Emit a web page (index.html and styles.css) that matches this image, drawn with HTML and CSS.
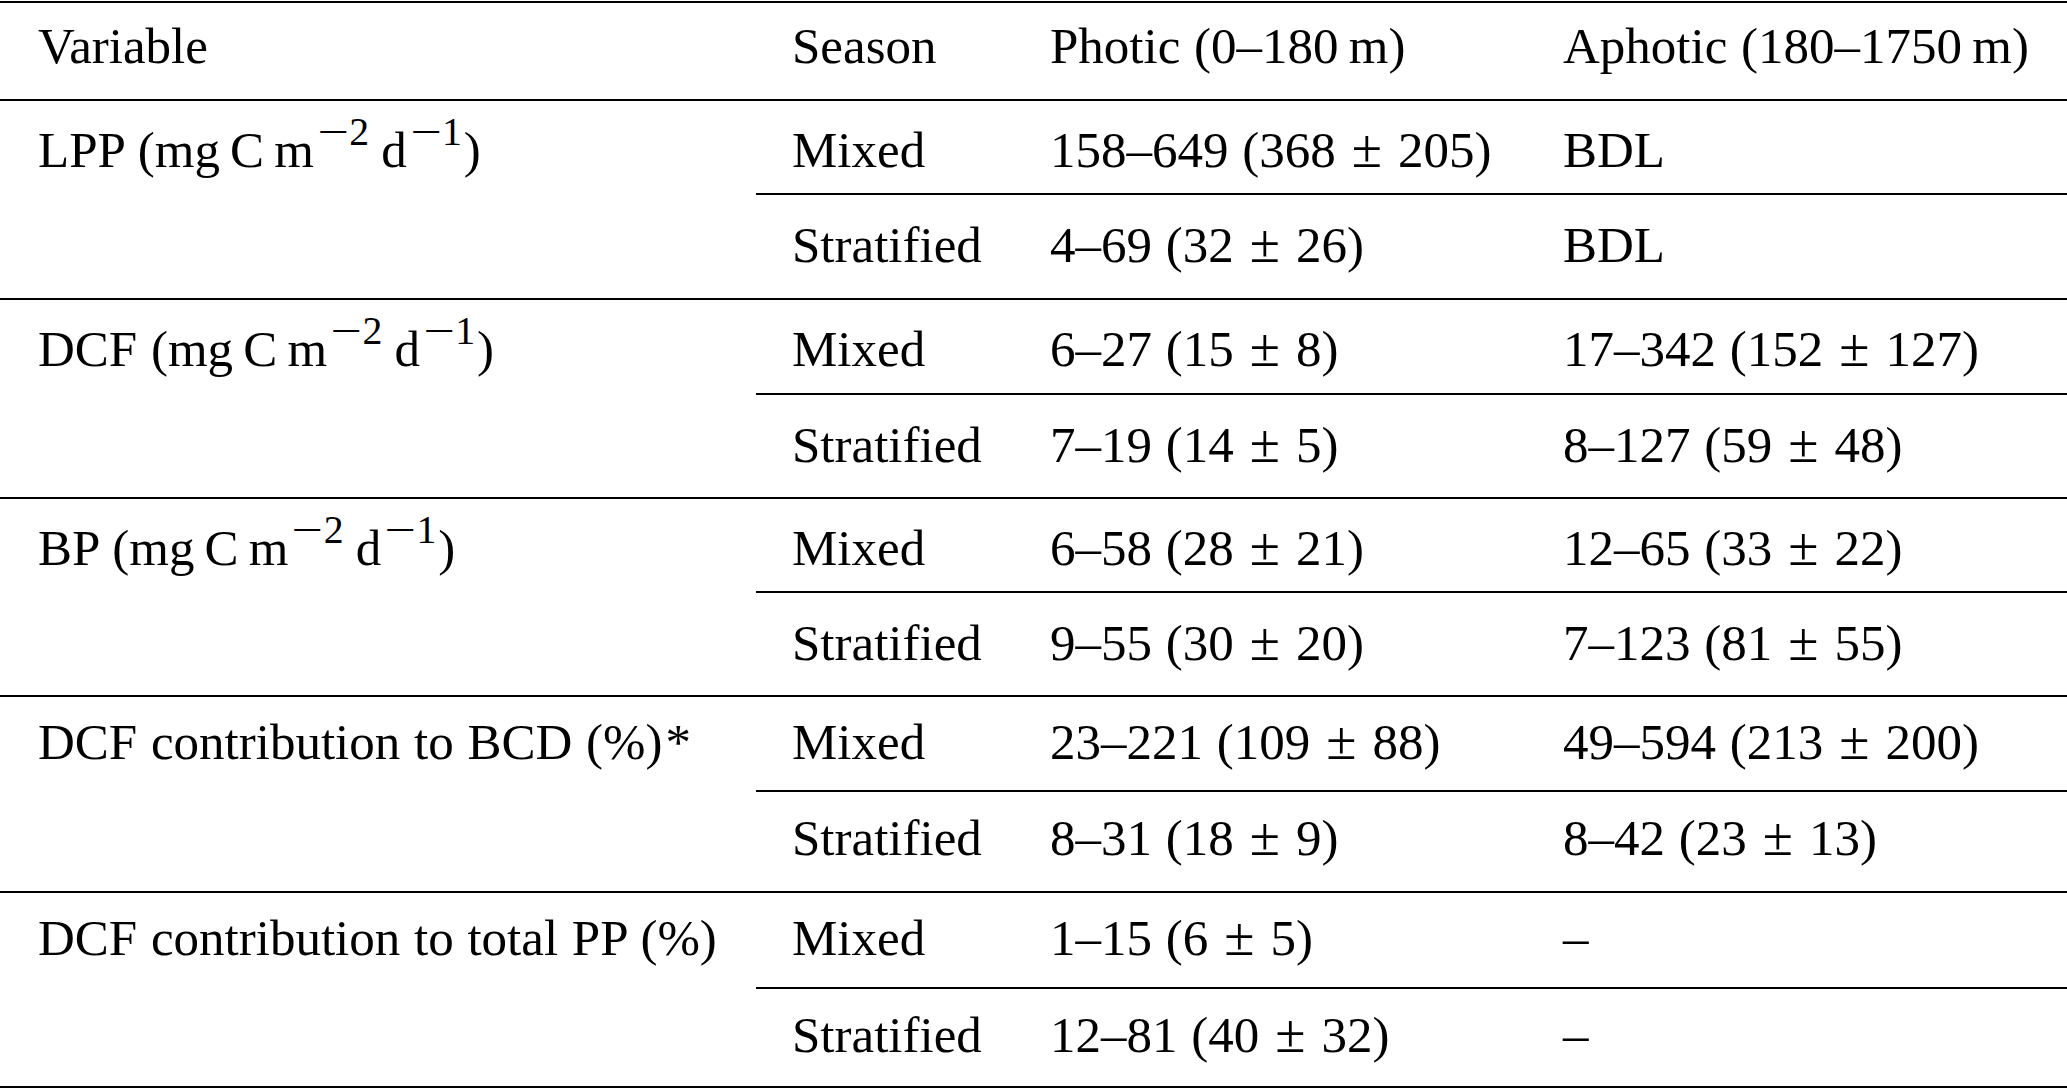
FILE: index.html
```html
<!DOCTYPE html>
<html lang="en">
<head>
<meta charset="utf-8">
<title>Table</title>
<link rel="stylesheet" href="styles.css">
</head>
<body>
<div class="tbl">
  <div class="c c1 hd">Variable</div>
  <div class="c hd">Season</div>
  <div class="c hd">Photic (0–180&thinsp;m)</div>
  <div class="c hd">Aphotic (180–1750&thinsp;m)</div>

  <div class="c c1 grp lo">LPP (mg&thinsp;C&thinsp;m<sup><span class="mn">−</span>2</sup>&thinsp;d<sup><span class="mn">−</span>1</sup>)</div>
  <div class="c lo">Mixed</div>
  <div class="c lo">158–649 (368<span class="pm">±</span>205)</div>
  <div class="c lo">BDL</div>
  <div class="c s2 lo">Stratified</div>
  <div class="c s2 lo">4–69 (32<span class="pm">±</span>26)</div>
  <div class="c s2 lo">BDL</div>

  <div class="c c1 grp lo">DCF (mg&thinsp;C&thinsp;m<sup><span class="mn">−</span>2</sup>&thinsp;d<sup><span class="mn">−</span>1</sup>)</div>
  <div class="c lo">Mixed</div>
  <div class="c lo">6–27 (15<span class="pm">±</span>8)</div>
  <div class="c lo">17–342 (152<span class="pm">±</span>127)</div>
  <div class="c s2 lo">Stratified</div>
  <div class="c s2 lo">7–19 (14<span class="pm">±</span>5)</div>
  <div class="c s2 lo">8–127 (59<span class="pm">±</span>48)</div>

  <div class="c c1 grp lo">BP (mg&thinsp;C&thinsp;m<sup><span class="mn">−</span>2</sup>&thinsp;d<sup><span class="mn">−</span>1</sup>)</div>
  <div class="c lo">Mixed</div>
  <div class="c lo">6–58 (28<span class="pm">±</span>21)</div>
  <div class="c lo">12–65 (33<span class="pm">±</span>22)</div>
  <div class="c s2 lo">Stratified</div>
  <div class="c s2 lo">9–55 (30<span class="pm">±</span>20)</div>
  <div class="c s2 lo">7–123 (81<span class="pm">±</span>55)</div>

  <div class="c c1 grp hi">DCF contribution to BCD (%)<span class="ast">*</span></div>
  <div class="c hi">Mixed</div>
  <div class="c hi">23–221 (109<span class="pm">±</span>88)</div>
  <div class="c hi">49–594 (213<span class="pm">±</span>200)</div>
  <div class="c s2 hi">Stratified</div>
  <div class="c s2 hi">8–31 (18<span class="pm">±</span>9)</div>
  <div class="c s2 hi">8–42 (23<span class="pm">±</span>13)</div>

  <div class="c c1 grp hi">DCF contribution to total PP (%)</div>
  <div class="c hi">Mixed</div>
  <div class="c hi">1–15 (6<span class="pm">±</span>5)</div>
  <div class="c hi">–</div>
  <div class="c s2 hi">Stratified</div>
  <div class="c s2 hi">12–81 (40<span class="pm">±</span>32)</div>
  <div class="c s2 hi">–</div>
</div>
</body>
</html>
```

FILE: styles.css
```css
html, body {
  margin: 0;
  background: #ffffff;
}

body {
  padding-top: 1px;
  font-family: "Liberation Serif", "Times New Roman", serif;
  font-size: 51px;
  color: #000000;
}

.tbl {
  width: 2067px;
  display: grid;
  grid-template-columns: 756px 258px 513px 540px;
  grid-template-rows: 98px 94px 105px 95px 104px 94px 104px 95px 101px 96px 99px;
  border-bottom: 2px solid #000000;
}

.c {
  box-sizing: border-box;
  border-top: 2px solid #000000;
  padding: 21px 0 0 36px;
  line-height: 51px;
  white-space: nowrap;
  word-spacing: 1px;
}

.c1 {
  padding-left: 38px;
}

.grp {
  grid-row: span 2;
}

.hd {
  padding-top: 18px;
}

.lo {
  padding-top: 24px;
}

.lo.s2 {
  padding-top: 25px;
}

.hi {
  padding-top: 20px;
}

.hi.s2 {
  padding-top: 21px;
}

sup {
  font-size: 0.78em;
  line-height: 0;
  vertical-align: 0.55em;
  margin-left: 0;
  margin-right: 0.05em;
}

.mn {
  display: inline-block;
  transform: scaleX(1.4);
  margin: 0 0.12em 0 0.2em;
}

.ast {
  margin-left: 0.06em;
}

.pm {
  font-size: 1.08em;
  line-height: 0;
  margin: 0 0.29em;
}
```
